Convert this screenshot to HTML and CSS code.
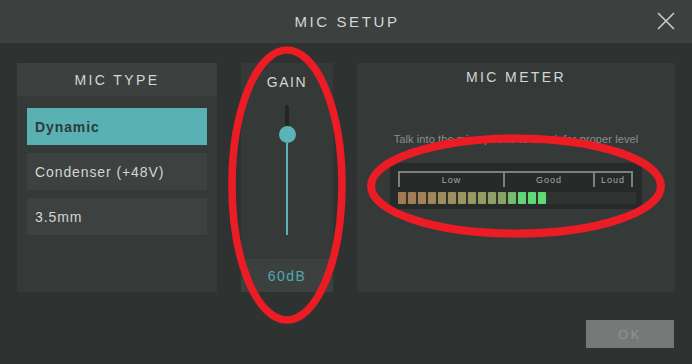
FILE: index.html
```html
<!DOCTYPE html>
<html lang="en">
<head>
  <meta charset="UTF-8" />
  <title>Mic Setup</title>
  <link rel="stylesheet" href="styles.css">
</head>
<body>

  <header class="topbar">
    <span></span>
    <h1>MIC SETUP</h1>
    <button class="close" aria-label="Close">
      <svg width="18" height="18" viewBox="0 0 18 18">
        <path d="M1 1 L17 17 M17 1 L1 17" stroke="#c9cdcb" stroke-width="1.6" fill="none"/>
      </svg>
    </button>
  </header>

  <main class="panels">
    <section class="panel type">
      <h2 class="panel-head">MIC TYPE</h2>
      <div class="options">
        <button class="option active">Dynamic</button>
        <button class="option">Condenser (+48V)</button>
        <button class="option">3.5mm</button>
      </div>
    </section>

    <section class="panel gain">
      <h2 class="gain-title">GAIN</h2>
      <div class="slider">
        <div class="track-off"></div>
        <div class="knob"></div>
        <div class="track-on"></div>
      </div>
      <div class="gain-value">60dB</div>
    </section>

    <section class="panel meter">
      <h2 class="meter-title">MIC METER</h2>
      <p class="hint">Talk into the microphone to check for proper level</p>
      <div class="meter-box">
        <div class="zones">
          <div class="zone low">Low</div>
          <div class="zone good">Good</div>
          <div class="zone loud">Loud</div>
        </div>
        <div class="bars" id="bars"></div>
      </div>
    </section>
  </main>

  <footer class="actions">
    <button class="ok" disabled>OK</button>
  </footer>

  <!-- red markup drawn on top of the screenshot -->
  <svg class="marks" width="692" height="364" viewBox="0 0 692 364">
    <ellipse cx="287" cy="185" rx="55" ry="135" fill="none" stroke="#ec1c24" stroke-width="7.5"/>
    <ellipse cx="516" cy="186" rx="145" ry="47.5" fill="none" stroke="#ec1c24" stroke-width="8"/>
  </svg>

  <script>
  const colors = ['#a47a50', '#a57d55', '#a48258', '#a2865a', '#a08b5c', '#9e905e', '#9a955f',
    '#979a60', '#939d61', '#8ea062', '#88a463', '#76bd6a', '#60d774', '#5fd975', '#5edb76'];
  const bars = document.getElementById('bars');
  colors.forEach(function (c) {
    const seg = document.createElement('span');
    seg.className = 'seg';
    seg.style.background = c;
    bars.appendChild(seg);
  });
  </script>
</body>
</html>
```

FILE: styles.css
```css
body {
  margin: 0;
  width: 692px;
  height: 364px;
  background: #2e3332;
  font-family: "Liberation Sans", Arial, sans-serif;
  color: #d0d4d2;
  overflow: hidden;
  position: relative;
}
h1, h2, p {
  margin: 0;
  font-weight: normal;
}
button {
  font-family: inherit;
  border: none;
  cursor: pointer;
}

.topbar {
  height: 43px;
  background: #3c4140;
  display: grid;
  grid-template-columns: 1fr auto 1fr;
  align-items: center;
}
.topbar h1 {
  font-size: 15px;
  letter-spacing: 2.6px;
  color: #d3d6d5;
  padding-left: 2px;
}
.close {
  justify-self: end;
  margin-right: 17px;
  background: none;
  padding: 0;
  width: 18px;
  height: 18px;
  margin-top: -1px;
}
.close svg {
  display: block;
}

.panels {
  display: flex;
  gap: 24px;
  padding: 20px 17px 0;
  height: 229px;
}
.panel {
  background: #353a39;
  display: flex;
  flex-direction: column;
}

.type {
  width: 200px;
}
.panel-head {
  height: 33px;
  background: #3c4140;
  display: flex;
  align-items: center;
  justify-content: center;
  font-size: 14px;
  letter-spacing: 2.4px;
  color: #d3d6d5;
}
.options {
  display: flex;
  flex-direction: column;
  gap: 8px;
  padding: 12px 10px;
}
.option {
  height: 37px;
  background: #3d4241;
  color: #d3d6d5;
  font-size: 14px;
  letter-spacing: 0.9px;
  text-align: left;
  padding: 0 8px;
}
.option.active {
  background: #59b1b4;
  color: #2f3b3b;
  font-weight: bold;
}

.gain {
  width: 92px;
  align-items: center;
}
.gain-title {
  font-size: 14px;
  letter-spacing: 1.6px;
  color: #d3d6d5;
  margin-top: 11px;
  line-height: 16px;
}
.slider {
  margin-top: 15px;
  height: 130px;
  display: flex;
  flex-direction: column;
  align-items: center;
}
.track-off {
  width: 4px;
  height: 22px;
  background: #222625;
  border-radius: 2px 2px 0 0;
}
.knob {
  width: 17px;
  height: 17px;
  border-radius: 50%;
  background: #5ab3b6;
  margin-top: -1px;
}
.track-on {
  width: 2px;
  flex: 1;
  background: #5ab3b6;
}
.gain-value {
  margin-top: auto;
  align-self: stretch;
  height: 33px;
  background: #3c4140;
  color: #4fa9ae;
  font-size: 14px;
  letter-spacing: 1.4px;
  display: flex;
  align-items: center;
  justify-content: center;
}

.meter {
  width: 318px;
  align-items: center;
}
.meter-title {
  font-size: 14px;
  letter-spacing: 2.4px;
  color: #d3d6d5;
  margin-top: 6px;
  line-height: 16px;
}
.hint {
  margin-top: 47px;
  font-size: 11px;
  letter-spacing: 0.1px;
  color: #8a8f8e;
  line-height: 14px;
}
.meter-box {
  margin-top: 17px;
  width: 252px;
  height: 46px;
  box-sizing: border-box;
  background: #262a29;
  padding: 8px 6px 0 8px;
}
.zones {
  display: flex;
  width: 235px;
  height: 16px;
}
.zone {
  border-top: 2px solid #7c8180;
  border-left: 2px solid #7c8180;
  font-size: 9px;
  letter-spacing: 1px;
  color: #a4a8a7;
  display: flex;
  align-items: center;
  justify-content: center;
  box-sizing: border-box;
  padding-bottom: 1px;
}
.low { width: 105px; }
.good { width: 90px; }
.loud {
  width: 40px;
  border-right: 2px solid #7c8180;
}
.bars {
  margin-top: 5px;
  width: 238px;
  height: 12px;
  background: #2f3433;
  display: flex;
  gap: 2px;
}
.seg {
  width: 8px;
  height: 12px;
  border-radius: 1px;
}

.actions {
  display: flex;
  justify-content: flex-end;
  padding: 28px 18px 0;
}
.ok {
  width: 88px;
  height: 28px;
  background: #757a78;
  color: #8f9391;
  font-size: 13px;
  letter-spacing: 2.5px;
  cursor: default;
}

.marks {
  position: absolute;
  left: 0;
  top: 0;
  pointer-events: none;
}
```
